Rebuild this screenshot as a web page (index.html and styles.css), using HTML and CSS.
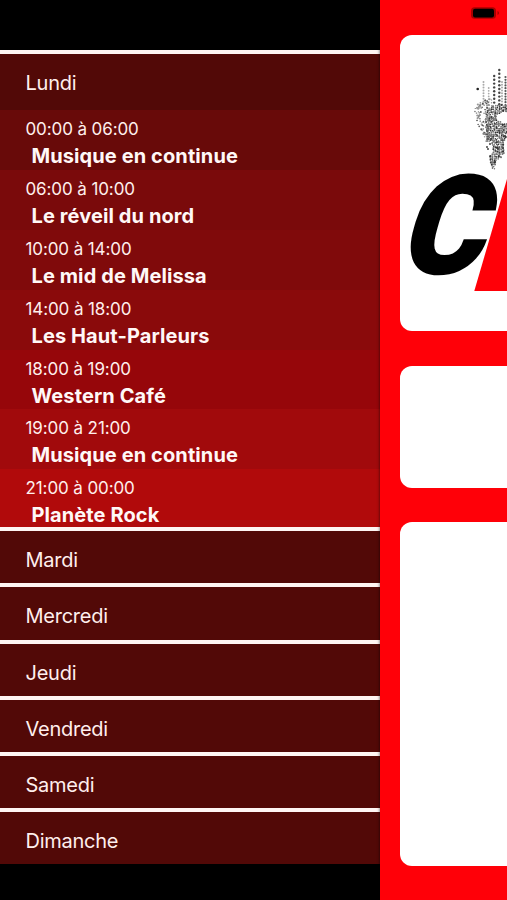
FILE: index.html
```html
<!DOCTYPE html>
<html lang="fr">
<head>
<meta charset="utf-8">
<title>Programmation</title>
<link rel="stylesheet" href="styles.css">
</head>
<body>
<div class="screen">
  <nav class="drawer">
    <section class="day open">
      <h2>Lundi</h2>
      <ul class="shows">
        <li class="show s1"><span class="time">00:00 à 06:00</span><strong>Musique en continue</strong></li>
        <li class="show s2"><span class="time">06:00 à 10:00</span><strong>Le réveil du nord</strong></li>
        <li class="show s3"><span class="time">10:00 à 14:00</span><strong>Le mid de Melissa</strong></li>
        <li class="show s4"><span class="time">14:00 à 18:00</span><strong>Les Haut-Parleurs</strong></li>
        <li class="show s5"><span class="time">18:00 à 19:00</span><strong>Western Café</strong></li>
        <li class="show s6"><span class="time">19:00 à 21:00</span><strong>Musique en continue</strong></li>
        <li class="show s7"><span class="time">21:00 à 00:00</span><strong>Planète Rock</strong></li>
      </ul>
    </section>
    <section class="day"><h2>Mardi</h2></section>
    <section class="day"><h2>Mercredi</h2></section>
    <section class="day"><h2>Jeudi</h2></section>
    <section class="day"><h2>Vendredi</h2></section>
    <section class="day"><h2>Samedi</h2></section>
    <section class="day"><h2>Dimanche</h2></section>
  </nav>
  <main class="player">
    <div class="status">
      <svg class="battery" width="30" height="14" viewBox="0 0 30 14"><rect x="1" y="1.2" width="25" height="11.6" rx="3.5" fill="#a00"/><rect x="3" y="2.8" width="21" height="8.6" rx="2" fill="#000"/><path d="M27.5 5v4q1.600-.6 1.600-2t-1.600-2" fill="#a00"/></svg>
    </div>
    <div class="card logo">
      <svg width="107" height="296" viewBox="400 35 107 296">
        <g id="dots"></g>
        <path d="M507 179V291H474.300Z" fill="#ff0008"/>
        <text class="initial" transform="translate(397 273) skewX(-16.600) scale(.91 .99)">C</text>
      </svg>
    </div>
    <div class="card track"></div>
    <div class="card content"></div>
  </main>
</div>
<script src="dots.js"></script>
</body>
</html>
```
FILE: styles.css
```css
* { box-sizing: border-box; }
body { margin: 0; background: #000; }
.screen {
  display: flex;
  width: 507px;
  height: 900px;
  overflow: hidden;
  font-family: Inter, "Liberation Sans", sans-serif;
  color: #ffefed;
}
.drawer {
  width: 380px;
  flex: none;
  padding-top: 49.600px;
  background: #000;
}
.day {
  height: 56.200px;
  border-top: 4px solid #fff5f3;
  background: #520907;
}
.day.open { height: 477.700px; }
.day h2 {
  margin: 0;
  height: 52.200px;
  padding-left: 25.500px;
  font-size: 20px;
  letter-spacing: -.25px;
  line-height: 58.400px;
  font-weight: 400;
}
.day.open h2 { height: 56.600px; }
.shows { margin: 0; padding: 0; list-style: none; height: 417px; overflow: hidden; }
.show { height: 59.850px; padding: 7px 0 0 25.500px; }
.time { display: block; font-size: 17px; line-height: 24px; letter-spacing: -.1px; }
.show strong {
  display: block;
  padding-left: 6px;
  font-size: 20px;
  letter-spacing: .1px;
  line-height: 30px;
  font-weight: 700;
  color: #fff8f7;
}
.s1 { background: #680a09; }
.s2 { background: #7a0a0b; }
.s3 { background: #800a0b; }
.s4 { background: #8a0a0b; }
.s5 { background: #96060a; }
.s6 { background: #a10a0c; }
.s7 { background: #b10a0b; }
.player {
  flex: 1;
  padding-left: 20px;
  background: #ff0008;
  box-shadow: 0 0 3px rgba(0, 0, 0, .7);
}
.status { display: flex; height: 35.400px; padding: 6px 0 0 70px; }
.card { background: #fff; border-radius: 12px 0 0 12px; overflow: hidden; }
.card svg { display: block; }
.logo { height: 296px; }
.track { height: 122px; margin-top: 34.200px; }
.content { height: 344px; margin-top: 34px; }
.initial {
  font: 900 138px Roboto, sans-serif;
  fill: #000;
  stroke: #000;
  stroke-width: 2px;
  stroke-linejoin: miter;
}
```
FILE: dots.js
```js
const group = document.getElementById('dots');
function dot(x, y, r, shade) {
  const c = document.createElementNS('http://www.w3.org/2000/svg', 'circle');
  c.setAttribute('cx', x);
  c.setAttribute('cy', y);
  c.setAttribute('r', r);
  c.setAttribute('fill', shade);
  group.appendChild(c);
}
let seed = 7;
function rand() {
  seed = (seed * 16807) % 2147483647;
  return seed / 2147483647;
}
// Falling columns: x, top, bottom, radius, shade
[[483.5, 82, 106, 1, '#aaa'], [488.7, 88, 106, .9, '#aaa'], [491.500, 100, 108, .7, '#999'],
 [494.200, 76, 106, 1.200, '#444'], [499.300, 70, 106, 1.200, '#444'],
 [502, 82, 106, 1, '#aaa'], [505.500, 77, 106, 1.100, '#555']]
  .forEach(([x, top, bottom, r, shade]) => {
    for (let y = top; y < bottom; y += x === 499.3 || x === 494.2 ? 3.800 : 2.800) dot(x, y, r, shade);
  });
dot(477.7, 89, 1.300, '#222');
// Edges of the dense face area: y, left, right
const face = [[105, 493, 507], [110, 487, 507], [118, 485, 497], [124, 486, 507], [136, 487, 507],
  [142, 492, 503], [147, 493, 503], [152, 493, 504], [156, 490, 500], [162, 490, 495], [168, 492, 495]];
for (let i = 0; i < face.length - 1; i++) {
  const [y0, l0, r0] = face[i], [y1, l1, r1] = face[i + 1];
  for (let y = y0; y < y1; y += 1.900) {
    const t = (y - y0) / (y1 - y0);
    const left = l0 + (l1 - l0) * t, right = r0 + (r1 - r0) * t;
    for (let x = left; x <= right; x += 2) {
      if (((x - 504) / 8) ** 2 + ((y - 117) / 5.500) ** 2 < 1) continue;
      dot(x + rand() * 1.100, y + rand() * 1.300, .7 + rand() * .45, rand() < .5 ? '#333' : '#777');
    }
  }
}
for (let i = 0; i < 130; i++) {
  const y = 99 + rand() * 43;
  const left = 473 + Math.abs(y - 113) * .45;
  dot(left + rand() * (490 - left), y, .5 + rand() * .6, rand() < .5 ? '#555' : '#999');
}
[[487, 147], [490, 144], [488, 149], [491, 139]].forEach(([x, y]) => dot(x, y, 1, '#444'));
```
